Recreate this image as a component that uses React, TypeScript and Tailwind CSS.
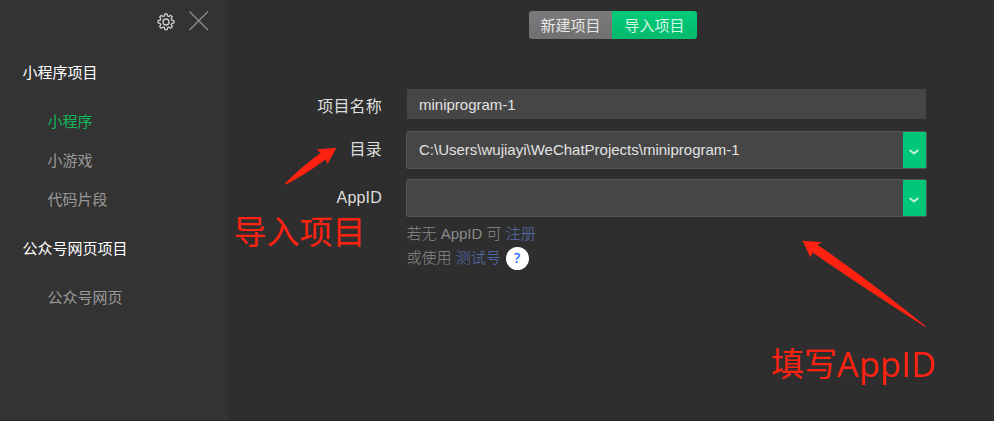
import React from "react";

const sans = "font-['Liberation_Sans','Noto_Sans_CJK_SC',sans-serif]";

function GearIcon() {
  return (
    <svg className="h-[18px] w-[18px]" viewBox="0 0 18 18" fill="none" stroke="#d2d2d2" strokeWidth="1.3" strokeLinejoin="round">
      <path d="M7.9 0.9h2.2l.5 2.1 1.3.5 1.8-1.1 1.6 1.6-1.1 1.8.6 1.4 2.1.5v2.2l-2.1.5-.6 1.3 1.1 1.9-1.6 1.6-1.8-1.1-1.3.5-.5 2.1H7.9l-.5-2.1-1.3-.5-1.8 1.1-1.6-1.6 1.1-1.9-.6-1.3-2.1-.5V7.7l2.1-.5.6-1.4-1.1-1.8 1.6-1.6 1.8 1.1 1.3-.5z" />
      <circle cx="9" cy="9" r="3" />
    </svg>
  );
}

function CloseIcon() {
  return (
    <svg className="h-5 w-5" viewBox="0 0 20 20" stroke="#8c8c8c" strokeWidth="1.3">
      <path d="M.5.5l18.500 18.500M19 .5l-18.500 18.500" />
    </svg>
  );
}

function MenuGroup({ title, items, active }: { title: string; items: string[]; active?: string }) {
  return (
    <section>
      <h2 className="h-[49px] pl-[22.5px] text-white">{title}</h2>
      <ul>
        {items.map((item) => (
          <li key={item} className={`h-[39px] pl-[47.5px] ${item === active ? "text-[#0fb858]" : "text-[#9a9a9a]"}`}>
            {item}
          </li>
        ))}
      </ul>
    </section>
  );
}

function SelectBox({ value }: { value: string }) {
  return (
    <div className="flex h-[38px] w-[521px] overflow-hidden rounded-[2px] border border-[#555]">
      <div className="flex-1 bg-[#464646] pl-3 text-[15px] leading-9 text-[#e2e2e2]">{value}</div>
      <button className="flex w-[23px] items-center justify-center bg-[#00c878]">
        <svg className="mr-px mt-[3px] h-[6px] w-[10px]" viewBox="0 0 10 6" fill="none" stroke="#c0f1da" strokeWidth="1.9">
          <path d="M.6.9L5 4.500 9.400.9" />
        </svg>
      </button>
    </div>
  );
}

function Label({ children }: { children: React.ReactNode }) {
  return <label className="w-[154px] pt-[2px] text-right text-base tracking-[0.2px] text-[#dedede]">{children}</label>;
}

export default function App() {
  return (
    <div className={`relative flex h-[421px] w-[994px] overflow-hidden border-b border-[#252525] bg-[#2e2e2e] text-[15px] leading-6 ${sans}`}>
      <aside className="w-[228px] bg-[#333]">
        <header className="flex h-[61px] justify-end gap-[13px] pr-[19px]">
          <div className="-ml-px mr-px pt-[13px]"><GearIcon /></div>
          <div className="pt-[11px]"><CloseIcon /></div>
        </header>
        <nav>
          <MenuGroup title="小程序项目" items={["小程序", "小游戏", "代码片段"]} active="小程序" />
          <div className="h-[10px]" />
          <MenuGroup title="公众号网页项目" items={["公众号网页"]} />
        </nav>
      </aside>

      <main className="flex-1">
        <div className="flex pl-[301px] pt-[11px]">
          <button className="h-7 w-[83px] rounded-l-[3px] bg-linear-to-b from-[#7b7b7b] to-[#707070] pt-px text-[#e6e6e6]">新建项目</button>
          <button className="h-7 w-[85px] rounded-r-[3px] bg-linear-to-b from-[#03cb79] to-[#02b96c] pt-px text-[#d3f7e6]">导入项目</button>
        </div>
        <form className="pt-[50px]">
          <div className="flex h-[42px]">
            <div className="flex h-[34px] items-center"><Label>项目名称</Label></div>
            <div className="ml-[25px] h-[30px] w-[519px] bg-[#464646] pl-3 leading-[31px] text-[#e2e2e2]">miniprogram-1</div>
          </div>
          <div className="flex h-12">
            <div className="flex h-9 items-center"><Label>目录</Label></div>
            <div className="ml-6"><SelectBox value="C:\Users\wujiayi\WeChatProjects\miniprogram-1" /></div>
          </div>
          <div className="flex h-[43px]">
            <div className="flex h-9 items-center"><Label>AppID</Label></div>
            <div className="ml-6"><SelectBox value="" /></div>
          </div>
          <div className="pl-[178.5px] font-light text-[#8a8a8a]">
            <p className="h-6">若无 AppID 可 <a className="text-[#5a70b4]">注册</a></p>
            <p className="flex h-6 items-center">
              <span>或使用 <a className="text-[#5a70b4]">测试号</a></span>
              <span className="ml-[5px] flex h-[23px] w-[23px] items-center justify-center rounded-full bg-white font-['Noto_Sans'] text-sm font-medium text-[#1260ff]">?</span>
            </p>
          </div>
        </form>
      </main>

      <svg className="pointer-events-none absolute left-0 top-0 h-[420px] w-[994px]" viewBox="0 0 994 420" fill="#ff2211">
        <path d="M336.500 147.700L316.500 149.500 320.800 152.700Q300 168 285 183.500Q284.500 184.700 286 184.600Q306 174 325.500 159.500L327.500 164Z" />
        <path d="M802.500 240.800L822 242.200 817.500 244.700Q874 284 926 326.500Q925.500 327.200 924.500 326.500Q864 288 812.500 252.500L810.500 257.500Z" />
      </svg>
      <p className="absolute left-[233.500px] top-[209px] text-[33px] leading-[48px] text-[#ff2211]">导入项目</p>
      <p className="absolute left-[771px] top-[340px] flex font-['Noto_Sans','Noto_Sans_CJK_SC',sans-serif] text-[33px] leading-[48px] text-[#ff2211]">
        <span>填写</span>
        <span className="font-['Open_Sans'] text-[34px] tracking-[0.4px]">AppID</span>
      </p>
    </div>
  );
}
